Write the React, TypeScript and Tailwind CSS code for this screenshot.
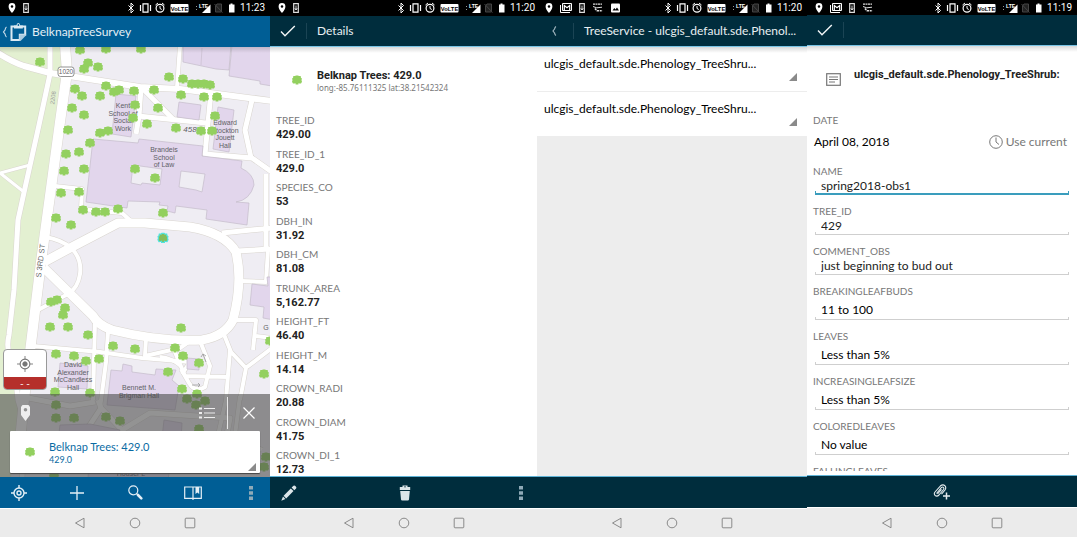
import React from "react";

type Kids = { children?: React.ReactNode };

const TREE =
  "M-1.200-4.600 L1.200-4.600 L1.800-3.900 L3.700-3.900 L3.900-2.200 L4.900-1.500 L4.500.2 L5 1.800 L4 3.600 L2.400 3.500 L1.400 3.200 L1.400 4.500 L-1.400 4.500 L-1.400 3.200 L-2.400 3.500 L-4 3.600 L-5 1.800 L-4.500.2 L-4.900-1.500 L-3.900-2.200 L-3.700-3.900 L-1.800-3.900 Z";

const trees: [number, number][] = [
  [80, 50], [106, 49], [141, 49], [40, 62], [88, 63], [84, 69], [98, 67], [169, 77], [183, 79],
  [192, 84], [198, 84], [204, 84], [210, 85], [75, 89], [82, 96], [100, 96], [106, 86], [114, 92],
  [119, 90], [134, 91], [154, 90], [181, 95], [204, 97], [217, 97], [135, 105], [72, 108], [84, 115],
  [158, 108], [133, 118], [215, 116], [147, 124], [68, 130], [176, 128], [201, 131], [212, 131],
  [100, 133], [108, 131], [90, 143], [79, 152], [66, 154], [64, 171], [84, 169], [135, 169], [155, 178],
  [61, 193], [79, 192], [83, 210], [96, 212], [105, 212], [118, 209], [163, 213], [56, 218], [71, 225],
  [51, 302], [57, 300], [65, 308], [63, 315], [50, 327], [68, 327], [88, 335], [181, 328], [113, 346],
  [135, 349], [56, 354], [74, 356], [86, 361], [99, 359], [175, 348], [183, 356], [199, 363], [168, 372],
  [264, 374], [270, 341], [182, 389], [55, 392], [90, 393], [56, 405], [56, 418], [74, 418], [106, 417],
  [120, 421], [187, 399], [197, 394], [205, 401], [196, 405], [199, 429], [266, 457], [264, 467], [54, 474],
];

const roads: [string, number][] = [
  ["M-2 53 Q12 62 24 66 L50 73 L140 87 L180 89 L272 101", 6],
  ["M50 45 L50 74 L39 125 L25 188 L18 220 L14 290 L9 335 Q5 352 14 362 L18 400 L24 420 L22 480", 5],
  ["M65 45 L67 72 L60 122 L41 262 L30 352 L24 400 L20 440", 10],
  ["M180 45 L177 88", 4],
  ["M0 173 L30 165 M0 173 L24 192", 3],
  ["M142 88 L174 120", 5],
  ["M141 88 L139 116 L136 134", 5],
  ["M138 116 L206 123", 5],
  ["M211 92 L205 154 L252 158 L272 172", 5],
  ["M252 100 L245 130 L251 158", 5],
  ["M55 186 L82 189 L81 209 L122 213 L132 222", 4],
  ["M44 262 L72 247 L118 223 L145 223 L190 227 Q225 233 236 252 Q243 282 233 320 Q225 336 202 340 Q160 342 112 330 Q98 325 93 316 L44 268", 9],
  ["M222 233 L272 228 M237 251 L272 249 M266 174 L266 250", 5],
  ["M46 237 Q62 240 71 248 Q82 258 80 274 Q78 288 68 294 L38 310", 4],
  ["M33 346 L100 352 L142 358 L190 362 L182 374", 4],
  ["M95 322 L93 400 M108 332 L106 362 L100 408", 4],
  ["M146 338 L145 356 L180 348 L190 341 M160 357 Q172 358 181 366", 4],
  ["M172 345 L185 376 L228 377 M200 341 L210 366 L205 387 Q195 393 189 383 L181 369", 4],
  ["M241 281 L266 282 L268 250 M233 320 L256 320 L253 350", 4],
  ["M223 332 L231 352 L246 368 L240 400 M247 367 L272 348 M256 336 L272 338 M230 350 L226 400 L218 435", 4],
  ["M98 400 L101 408 L80 440 M101 408 L122 430 L150 413 L230 418 L226 440 M18 396 L70 406 L95 402", 5],
  ["M240 396 L235 435 L262 450", 4],
];

const buildings = [
  "M183 45 L183 62 L216 69 L229 70 L231 45 Z",
  "M232 45 L229 76 L260 81 L260 84 L272 86 L272 45 Z",
  "M116 94 L136 96 L131 137 L112 134 Z",
  "M179 102 L201 105 L199 120 L177 117 Z",
  "M218 107 L234 110 L229 152 L213 149 Z",
  "M93 139 L138 143 L139 139 L203 146 L202 156 L242 161 L241 168 Q254 174 254 185 Q250 200 236 202 L249 203 L247 225 L206 219 L207 210 L176 206 L175 213 L167 211 L168 206 L159 205 L160 202 L128 201 L127 208 L86 202 Z",
  "M252 284 L268 286 L267 277 L274 277 L274 320 L263 318 L264 307 L250 305 Z",
  "M60 363 L88 366 L87 389 L58 387 Z",
  "M111 370 L122 371 L123 364 L132 366 L132 372 L155 375 L156 369 L176 370 L172 380 L179 386 L175 410 L107 405 Z",
  "M187 358 L199 359 L199 370 L187 369 Z",
  "M60 425 L90 424 L120 430 L115 440 L58 440 Z",
  "M164 420 L182 423 L181 440 L162 438 Z",
  "M89 460 L170 466 L168 480 L88 480 Z",
];

const mapLabels: { x: number; y: number; lines: string[] }[] = [
  { x: 123, y: 108, lines: ["Kent", "School of", "Social", "Work"] },
  { x: 225, y: 125, lines: ["Edward", "Stockton", "Jouett", "Hall"] },
  { x: 164, y: 152, lines: ["Brandeis", "School", "of Law"] },
  { x: 73, y: 367, lines: ["David", "Alexander", "McCandless", "Hall"] },
  { x: 139, y: 390, lines: ["Bennett M.", "Brigman Hall"] },
];

function CampusMap() {
  return (
    <svg className="absolute inset-0 h-full w-full" viewBox="0 47 270 430" preserveAspectRatio="xMidYMid slice" aria-label="Campus map">
      <rect x="-50" y="0" width="400" height="520" fill="#efedf3" />
      <path d="M-50 40 H65 L67 72 L60 122 L41 262 L30 352 L20 440 L10 480 H-50 Z" fill="#e3f0d1" />
      <g fill="none" strokeLinejoin="round">
        {roads.map(([d, w]) => (
          <path key={d} d={d} stroke="#d9d5cf" strokeWidth={w + 1} />
        ))}
        {roads.map(([d, w]) => (
          <path key={d} d={d} stroke="#ffffff" strokeWidth={w} />
        ))}
      </g>
      {buildings.map((d) => (
        <path key={d} d={d} fill="#e2d6ec" stroke="#c4bbca" strokeWidth=".7" />
      ))}
      <path d="M202 48 L201 65" stroke="#c4bbca" strokeWidth=".6" />
      <path d="M133 165 L162 169 L160 185 L142 183 L141 185 L131 183 Z M181 171 L205 174 L202 192 L196 190 L179 187 Z" fill="#efedf3" stroke="#c4bbca" strokeWidth=".7" />
      <g fontFamily="Liberation Sans, sans-serif" fontSize="7" fill="#5f5f66" textAnchor="middle">
        {mapLabels.map((l) => (
          <text key={l.lines[0]}>
            {l.lines.map((t, i) => (
              <tspan key={t} x={l.x} y={l.y + i * 7.7}>{t}</tspan>
            ))}
          </text>
        ))}
        <text x="190" y="132" fontStyle="italic" fontSize="8">458</text>
        <text x="131" y="476">Houser L</text>
        <text x="266" y="330">G</text>
        <text transform="translate(55 98) rotate(-83)" fontSize="6" fill="#999">2208</text>
        <text transform="translate(43 261) rotate(-83)" fontSize="7.5" fill="#666">S 3RD ST</text>
        <rect x="58" y="67" width="16" height="9.500" rx="2.500" fill="#fff" stroke="#777" strokeWidth=".8" />
        <text x="66" y="74.300" fontSize="6.500">1020</text>
      </g>
      <g fill="#93d05f">
        {trees.map(([x, y]) => (
          <path key={`${x}-${y}`} d={TREE} transform={`translate(${x} ${y})`} />
        ))}
      </g>
      <path d={TREE} transform="translate(163 238)" fill="#84bd5a" stroke="#4fe3dc" strokeWidth="1.200" />
      <path d="M206 362 L203 354 M201 357 L203 354 L206 356 M192 385 H200 M198 383 L200 385 L198 387" stroke="#999" fill="none" strokeWidth=".8" />
    </svg>
  );
}

function NoticeIcons({ count }: { count: number }) {
  return (
    <div className="flex items-center gap-[7px]">
      <svg width="8" height="10" viewBox="0 0 8 10" fill="#fff"><path fillRule="evenodd" d="M4 0 A3.400 3.400 0 0 1 7.400 3.400 Q7.400 6 4 10 Q.6 6 .6 3.400 A3.400 3.400 0 0 1 4 0 M4 2.200 A1.300 1.300 0 1 0 4 4.800 A1.300 1.300 0 1 0 4 2.200" /></svg>
      {count > 2 && (
        <svg width="12" height="10" viewBox="0 0 12 10" fill="none" stroke="#fff"><path d="M2.500.5 H11.500 V7.500 H2.500 Z M.5 2 V9.500 H10" /><path d="M4.300 7 V2.500 L7 4.800 L9.700 2.500 V7" strokeWidth="1.200" /></svg>
      )}
      <svg width="6" height="10" viewBox="0 0 6 10"><path d="M.7 .7 H5.300 V9.300 H.7 Z" fill="none" stroke="#ddd" strokeWidth="1.200" /><path d="M3 2.500 V7 M1.800 5.200 L3 7 L4.200 5.200" stroke="#fff" fill="none" strokeWidth=".8" /></svg>
      {count > 2 && (
        <svg width="12" height="10" viewBox="0 0 12 10" fill="none" stroke="#ddd"><path d="M1 1.200 H10" strokeWidth="1.200" strokeDasharray="2 .5" /><path d="M1 3.500 Q4 5.800 10 4.200" /><path d="M3 5.500 L5 8 M5 7.800 H10.500" strokeWidth="1.600" strokeDasharray="2 .7" /></svg>
      )}
      {count > 4 && (
        <svg width="9" height="10" viewBox="0 0 9 10"><rect y=".5" width="9" height="9" rx="1" fill="#fff" /><path d="M1.500 7.500 L3.300 5 L4.500 6.500 L6 4.500 L8 7.500 Z" fill="#000" /></svg>
      )}
    </div>
  );
}

function StatusBar({ time, notices, className = "h-4 pr-[5px]" }: { time: string; notices: number; className?: string }) {
  return (
    <div className={`flex shrink-0 items-center justify-between bg-black pl-2 text-white ${className}`}>
      <NoticeIcons count={notices} />
      <div className="flex items-center gap-[3px]">
        <svg width="110" height="12" viewBox="0 0 110 12" fill="none" stroke="#fff" aria-label="Device status">
          <path d="M1.500 3.500 L6.500 8.500 L4 11 V1 L6.500 3.500 L1.500 8.500" />
          <path d="M16 1.800 H21 V10.200 H16 Z" strokeWidth="1.200" />
          <path d="M13.500 3 V9 M23.500 3 V9" strokeWidth="1.200" />
          <circle cx="33" cy="6.300" r="3.900" strokeWidth="1.200" />
          <path d="M33 4 V6.500 L34.800 7.500 M28.500 3 L31 1 M37.500 3 L35 1" />
          <rect x="43.500" y="2" width="18" height="8.500" rx="1" fill="#fff" stroke="none" />
          <text x="52.500" y="8.500" fontSize="5.800" fontFamily="Liberation Sans, sans-serif" fontWeight="bold" textAnchor="middle" fill="#000" stroke="none">VoLTE</text>
          <path d="M69.500 4 V5 M69.500 7 V8" stroke="#999" />
          <path d="M83.500 2.500 V11 H75 Z" fill="#fff" stroke="none" />
          <text x="72" y="5.500" fontSize="5" fontFamily="Liberation Sans, sans-serif" fontWeight="bold" fill="#fff" stroke="none">LTE</text>
          <path d="M90 2 H94.500 V10 H88.500 V4 Z" fill="#222" stroke="#444" /><path d="M87.500 2 L95.500 10.500" stroke="#444" />
          <path d="M102 2.500 H103.500 V1.500 H105.500 V2.500 H107.500 V10.500 H102 Z" fill="#fff" stroke="none" />
        </svg>
        <span className="font-[Roboto,sans-serif] text-[10px] leading-4">{time}</span>
      </div>
    </div>
  );
}

function AndroidNav({ className = "h-7" }: { className?: string }) {
  const btn = "flex size-[15px] items-center justify-center";
  return (
    <nav className={`flex shrink-0 items-center justify-center gap-10 bg-[#ebebeb] ${className}`}>
      <button className={btn} aria-label="Back"><svg width="12" height="12" viewBox="0 0 12 12" fill="none" stroke="#8a8a8a"><path d="M10 1.200 V10.800 L1.500 6 Z" strokeLinejoin="round" /></svg></button>
      <button className={btn} aria-label="Home"><svg width="12" height="12" viewBox="0 0 12 12" fill="none" stroke="#8a8a8a"><circle cx="6" cy="6" r="4.800" /></svg></button>
      <button className={btn} aria-label="Recent apps"><svg width="12" height="12" viewBox="0 0 12 12" fill="none" stroke="#8a8a8a"><rect x="1.200" y="1.200" width="9.600" height="9.600" rx=".8" /></svg></button>
    </nav>
  );
}

function DarkHeader({ title, back }: { title?: string; back?: boolean }) {
  return (
    <header className="flex h-[31px] shrink-0 items-center border-b border-[#79c3e4] bg-[#002d3d] text-[#e8eff2]">
      <button className="flex h-4 w-[37px] shrink-0 items-center justify-center border-r border-[#1b4454]" aria-label={back ? "Back" : "Done"}>
        {back ? (
          <svg width="16" height="12" viewBox="0 0 16 12" fill="none" stroke="#9fb4bd" strokeWidth="1.200"><path d="M9 1.500 Q8 2 7.500 4 L6 6 L7.500 8 Q8 10 9 10.500" /></svg>
        ) : (
          <svg width="16" height="12" viewBox="0 0 16 12" fill="none" stroke="#f2f6f7" strokeWidth="1.400"><path d="M1 6.500 L5 10.700 L14.800 1" /></svg>
        )}
      </button>
      <h1 className="ml-[10px] text-[12px] leading-4 whitespace-nowrap">{title}</h1>
    </header>
  );
}

function Shade() {
  return <div className="pointer-events-none absolute inset-x-0 top-0 h-[6px] bg-linear-to-b from-black/15 to-transparent" />;
}

function Corner() {
  return <svg className="shrink-0" width="8" height="8" viewBox="0 0 8 8"><path d="M8 0 V8 H0 Z" fill="#8a8a8a" /></svg>;
}

function ToolButton({ label, children }: Kids & { label: string }) {
  return <button aria-label={label} className="flex size-[18px] items-center justify-center">{children}</button>;
}

function Dots() {
  return <svg width="4" height="14" viewBox="0 0 4 14" fill="#8faab8"><path d="M0 0H4V3.500H0Z M0 5.200H4V8.700H0Z M0 10.400H4V13.900H0Z" /></svg>;
}

function TreeIcon() {
  return <svg width="10" height="10" viewBox="-5 -5 10 10"><path d={TREE} fill="#93d05f" /></svg>;
}

function MapPhone() {
  return (
    <section className="flex min-h-0 min-w-0 flex-col">
      <StatusBar time="11:23" notices={2} />
      <header className="flex h-[31px] shrink-0 items-center bg-[#005e95] pl-[2px] text-[#e4eff6]">
        <button aria-label="Back" className="flex items-center gap-[3px]">
          <svg width="5" height="12" viewBox="0 0 5 12" fill="none" stroke="#c6dcea" strokeWidth="1.200"><path d="M4.500 1 Q3.500 1.500 3 4 L1.500 6 L3 8 Q3.500 10.500 4.500 11" /></svg>
          <svg width="17" height="20" viewBox="0 0 17 20" fill="none" stroke="#dbeaf3"><path d="M10 18 H1.500 V4.500 H15.200 V13" strokeWidth="2" /><path d="M9.500 18.500 V12.500 H15.500" strokeWidth="1.400" /><path d="M16.200 13.200 L10.500 19 H9.500 V12.500 H16.200 Z" fill="#a9cbe0" stroke="none" /><path d="M4 6.500 V3.500 H6.500 Q6.500 1 8.300 1 Q10.200 1 10.200 3.500 H12.800 V6.500 Z" fill="#dbeaf3" stroke="none" /><circle cx="8.400" cy="3" r=".9" fill="#005e95" stroke="none" /></svg>
        </button>
        <h1 className="ml-[5px] text-[12px] leading-4">BelknapTreeSurvey</h1>
      </header>
      <main className="relative flex min-h-0 flex-1 flex-col justify-end overflow-hidden">
        <CampusMap />
        <Shade />
        <button aria-label="Locate me" className="relative mb-1 ml-[3px] flex w-11 flex-col overflow-hidden rounded-[4px] border border-[#999] bg-white">
          <span className="flex h-[27px] w-full items-center justify-center">
            <svg width="16" height="16" viewBox="0 0 18 18" fill="none" stroke="#777"><circle cx="9" cy="9" r="5.500" strokeWidth="1.200" /><circle cx="9" cy="9" r="2.500" fill="#777" /><path d="M9 0V4M9 14V18M0 9H4M14 9H18" /></svg>
          </span>
          <span className="h-3 w-full bg-[#b52f2b] text-center text-[10px] leading-3 text-white">- -</span>
        </button>
        <div className="relative flex h-[83px] shrink-0 flex-col bg-[#4b4b4b]/60 px-[10px] pb-1">
          <div className="flex h-[37px] items-center">
            <svg className="ml-[11px]" width="9" height="16" viewBox="0 0 9 16"><path fillRule="evenodd" d="M1.500 0 H7.500 L9 2 V10 L4.500 16 L0 10 V2 Z M4.500 3 A1.800 1.800 0 1 0 4.500 6.600 A1.800 1.800 0 1 0 4.500 3" fill="#eee" /></svg>
            <button aria-label="Results list" className="ml-auto"><svg width="16" height="12" viewBox="0 0 16 12" fill="none" stroke="#eee"><path d="M0 1.500H3M0 6H3M0 10.500H3" strokeWidth="2" /><path d="M5 1.500H16M5 6H16M5 10.500H16" strokeWidth="1.200" /></svg></button>
            <span className="ml-3 h-8 w-px bg-white/80" />
            <button aria-label="Close" className="mr-[5px] ml-[15px]"><svg width="12" height="12" viewBox="0 0 12 12" stroke="#fff" strokeWidth="1.200"><path d="M.5.5L11.500 11.500M11.500.5L.5 11.500" /></svg></button>
          </div>
          <button className="flex flex-1 items-center rounded-[1px] bg-white text-left text-[#0a6ba3] shadow-[0_1px_1px_#444]">
            <span className="ml-[15px] w-6"><TreeIcon /></span>
            <span className="flex-1 pt-px">
              <span className="block text-[11px] leading-[14px]">Belknap Trees: 429.0</span>
              <span className="block text-[9px] leading-3">429.0</span>
            </span>
            <span className="self-end pr-1 pb-[2px]"><Corner /></span>
          </button>
        </div>
      </main>
      <div className="mb-px flex h-[31px] shrink-0 items-center justify-between bg-[#005e95] px-[10px]">
        <ToolButton label="My location"><svg width="16" height="16" viewBox="0 0 16 16" fill="none" stroke="#e4eff6"><circle cx="8" cy="8" r="5" strokeWidth="1.400" /><circle cx="8" cy="8" r="2" strokeWidth="1.400" /><path d="M8 0V3M8 13V16M0 8H3M13 8H16" strokeWidth="1.400" /></svg></ToolButton>
        <ToolButton label="Add"><svg width="14" height="14" viewBox="0 0 14 14" stroke="#e4eff6" strokeWidth="1.300"><path d="M7 0V14M0 7H14" /></svg></ToolButton>
        <ToolButton label="Search"><svg width="15" height="15" viewBox="0 0 15 15" fill="none" stroke="#e4eff6"><circle cx="5.300" cy="5.300" r="4.500" strokeWidth="1.200" /><path d="M8.500 8.500L10 10" strokeWidth="1.300" /><path d="M10 10L13.300 13.300" strokeWidth="2.600" strokeLinecap="round" /></svg></ToolButton>
        <ToolButton label="Bookmarks"><svg width="18" height="14" viewBox="0 0 18 14" fill="none" stroke="#e4eff6"><path d="M.7 1H17.300V12.300H10L9 13.200L8 12.300H.7Z M9 1V13" strokeWidth="1.200" /><path d="M11.500 1H15.200V8L13.300 6.500L11.500 8Z" fill="#e4eff6" stroke="none" /></svg></ToolButton>
        <ToolButton label="More"><Dots /></ToolButton>
      </div>
      <AndroidNav />
    </section>
  );
}

const attributes: [string, string][] = [
  ["TREE_ID", "429.00"], ["TREE_ID_1", "429.0"], ["SPECIES_CO", "53"], ["DBH_IN", "31.92"], ["DBH_CM", "81.08"],
  ["TRUNK_AREA", "5,162.77"], ["HEIGHT_FT", "46.40"], ["HEIGHT_M", "14.14"], ["CROWN_RADI", "20.88"],
  ["CROWN_DIAM", "41.75"], ["CROWN_DI_1", "12.73"],
];

function DetailsPhone() {
  return (
    <section className="flex min-h-0 min-w-0 flex-col bg-white">
      <StatusBar time="11:20" notices={2} className="h-4 pr-[2px]" />
      <DarkHeader title="Details" />
      <main className="relative flex min-h-0 flex-1 flex-col overflow-hidden">
        <Shade />
        <div className="flex h-[66px] shrink-0 items-center pl-[22px]">
          <TreeIcon />
          <div className="ml-[15px] pt-px">
            <h2 className="font-[Roboto,sans-serif] text-[11px] leading-[13px] font-bold text-[#222]">Belknap Trees: 429.0</h2>
            <p className="font-['Noto_Sans',sans-serif] text-[8px] leading-[11px] text-[#777]">long:-85.76111325 lat:38.21542324</p>
          </div>
        </div>
        <dl className="flex min-h-0 flex-1 flex-col justify-between pl-[6px]">
          {attributes.map(([k, v]) => (
            <div key={k}>
              <dt className="text-[10px] leading-[15px] text-[#777]">{k}</dt>
              <dd className="font-[Roboto,sans-serif] text-[11px] leading-[13px] font-bold text-[#222]">{v}</dd>
            </div>
          ))}
        </dl>
      </main>
      <div className="mb-px flex h-8 shrink-0 items-center justify-between border-t border-[#5fb3d6] bg-[#002d3d] pr-[7px] pl-[10px]">
        <ToolButton label="Edit"><svg width="16" height="16" viewBox="0 0 16 16" fill="#dbe5e9"><path d="M.3 15.700L2 11.500L4.500 14Z M2.600 10.800L9.800 3.400L12.500 6.100L5.200 13.400Z M10.600 2.600L12.500.8Q13.500 0 14.600 1.200Q16 2.400 15.100 3.500L13.300 5.300Z" /></svg></ToolButton>
        <ToolButton label="Delete"><svg width="12" height="16" viewBox="0 0 12 16" fill="#dbe5e9"><path fillRule="evenodd" d="M3.500 2V.5H8.500V2H11.200V5H.8V2Z M5 1.500V2.300H7V1.500Z" /><path d="M1.200 6H10.800L10 14.500Q9.800 15.500 8.800 15.500H3.200Q2.200 15.500 2 14.500Z" /></svg></ToolButton>
        <ToolButton label="More"><Dots /></ToolButton>
      </div>
      <AndroidNav />
    </section>
  );
}

function ServicePhone() {
  return (
    <section className="flex min-h-0 min-w-0 flex-col bg-white">
      <StatusBar time="11:20" notices={5} />
      <DarkHeader back title="TreeService - ulcgis_default.sde.Phenol..." />
      <main className="relative min-h-0 flex-1 bg-[#ededed]">
        <ul className="flex flex-col gap-px">
          {[1, 2].map((n) => (
            <li key={n}>
              <button className="flex h-11 w-full items-end bg-white pr-[10px] pb-[10px] pl-[7px] text-left text-black">
                <span className="pb-[9px] text-[12px] leading-4 whitespace-nowrap">ulcgis_default.sde.Phenology_TreeShru...</span>
                <span className="ml-auto"><Corner /></span>
              </button>
            </li>
          ))}
        </ul>
        <Shade />
      </main>
      <div className="mb-px h-8 shrink-0 border-t border-[#5fb3d6] bg-[#002d3d]" />
      <AndroidNav />
    </section>
  );
}

function Line({ active, children }: Kids & { active?: boolean }) {
  const tone = active
    ? "border-[#3a9dbd] border-b-2 before:bg-[#3a9dbd] after:bg-[#3a9dbd]"
    : "border-[#cfcfcf] border-b before:bg-[#cfcfcf] after:bg-[#cfcfcf]";
  return (
    <div className={`relative mx-[2px] flex before:absolute before:bottom-0 before:left-0 before:h-[2px] before:w-px before:content-[''] after:absolute after:right-0 after:bottom-0 after:h-[2px] after:w-px after:content-[''] ${tone}`}>
      {children}
    </div>
  );
}

const textFields = [
  { name: "NAME", value: "spring2018-obs1" },
  { name: "TREE_ID", value: "429" },
  { name: "COMMENT_OBS", value: "just beginning to bud out" },
];
const selectFields = [
  { name: "BREAKINGLEAFBUDS", value: "11 to 100" },
  { name: "LEAVES", value: "Less than 5%" },
  { name: "INCREASINGLEAFSIZE", value: "Less than 5%" },
  { name: "COLOREDLEAVES", value: "No value" },
  { name: "FALLINGLEAVES", value: "No value" },
];

function FormPhone() {
  const label = "block text-[10px] leading-[14px] text-[#777]";
  return (
    <section className="flex min-h-0 min-w-0 flex-col bg-white pr-[2px]">
      <StatusBar time="11:19" notices={4} className="h-[15px] pr-[5px]" />
      <DarkHeader />
      <main className="relative flex min-h-0 flex-1 flex-col pb-1">
        <Shade />
        <div className="flex h-[67px] shrink-0 items-center pl-[19px]">
          <svg width="15" height="13" viewBox="0 0 15 13" fill="none" stroke="#777"><rect x=".7" y=".7" width="13.600" height="11.600" strokeWidth="1.200" /><path d="M3 4H12M3 6.500H12M3 9H9" /></svg>
          <h2 className="mb-[10px] ml-[13px] font-[Roboto,sans-serif] text-[11px] leading-[14px] font-bold text-[#222]">ulcgis_default.sde.Phenology_TreeShrub:</h2>
        </div>
        <form className="min-h-0 flex-1 overflow-hidden px-[6px]">
          <div className="h-[51px]">
            <span className={label}>DATE</span>
            <div className="flex items-center justify-between pt-[7px] pr-1 text-[12px] leading-4 text-black">
              <span className="pl-px">April 08, 2018</span>
              <button type="button" className="flex items-center gap-[3px] text-[#777]">
                <svg width="14" height="14" viewBox="0 0 14 14" fill="none" stroke="#777"><circle cx="7" cy="7" r="6.300" /><path d="M7 2.500V7L10 9.500" /></svg>
                Use current
              </button>
            </div>
          </div>
          {textFields.map((f, i) => (
            <div key={f.name} className="mb-[9px]">
              <label htmlFor={f.name} className={label}>{f.name}</label>
              <Line active={i === 0}>
                <input id={f.name} defaultValue={f.value} className={`w-full bg-transparent pl-[6px] text-[12px] leading-4 text-[#222] outline-none ${i === 0 ? "h-[15px]" : "h-4"}`} />
              </Line>
            </div>
          ))}
          {selectFields.map((f) => (
            <div key={f.name} className="mb-[9px]">
              <label htmlFor={f.name} className={label}>{f.name}</label>
              <Line>
                <select id={f.name} defaultValue={f.value} className="h-[21px] w-full appearance-none bg-transparent pt-[3px] pl-[6px] text-[12px] leading-4 text-black outline-none">
                  <option>{f.value}</option>
                </select>
              </Line>
            </div>
          ))}
        </form>
      </main>
      <div className="mb-px flex h-8 shrink-0 items-center justify-center border-t border-[#5fb3d6] bg-[#002d3d]">
        <ToolButton label="Add attachment"><svg width="18" height="16" viewBox="0 0 18 16" fill="none" stroke="#e4ecef"><path d="M3.500 9.500L8.500 3.500Q9.700 2.500 10.500 3.500Q11.200 4.500 10.500 5.500L6 11Q4 13 2.200 11.500Q.5 10 2 8L7.500 1.800Q10 0 12 1.800Q13.500 3.500 12 6L8.500 10.200 M4.500 10L8.500 5.300" strokeWidth="1.100" /><path d="M13.500 8.500V15.500M10 12H17" strokeWidth="1.500" /></svg></ToolButton>
      </div>
      <AndroidNav className="h-[29px]" />
    </section>
  );
}

export default function App() {
  return (
    <div className="grid h-screen grid-cols-[270fr_267fr_270fr_272fr] grid-rows-1 overflow-hidden bg-white font-[Lato,sans-serif]">
      <MapPhone />
      <DetailsPhone />
      <ServicePhone />
      <FormPhone />
    </div>
  );
}
